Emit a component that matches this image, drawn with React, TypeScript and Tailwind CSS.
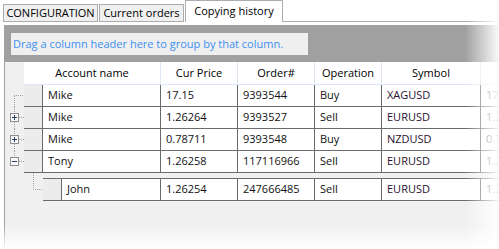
import React from 'react';

const LINE = '#6b6b6b';

type Row = { name: string; price: string; order: string; op: string; symbol: string; close: string };

const ROWS: Row[] = [
  { name: 'Mike', price: '17.15', order: '9393544', op: 'Buy', symbol: 'XAGUSD', close: '17.152' },
  { name: 'Mike', price: '1.26264', order: '9393527', op: 'Sell', symbol: 'EURUSD', close: '1.26271' },
  { name: 'Mike', price: '0.78711', order: '9393548', op: 'Buy', symbol: 'NZDUSD', close: '0.78715' },
  { name: 'Tony', price: '1.26258', order: '117116966', op: 'Sell', symbol: 'EURUSD', close: '1.26263' },
];

const CHILD: Row = { name: 'John', price: '1.26254', order: '247666485', op: 'Sell', symbol: 'EURUSD', close: '1.26259' };

function Expander({ open }: { open: boolean }) {
  return (
    <>
      <rect x="5.5" y="6.5" width="8" height="8" fill="#f7f7f7" stroke="#8e8e8e" />
      <path d="M7 10.5h5" stroke="#2c3e66" />
      {!open && <path d="M9.5 8v5" stroke="#2c3e66" />}
    </>
  );
}

// tree connectors in the left gutter, one per top-level row
function Gutter({ kind }: { kind: 'first' | 'mid' | 'last' }) {
  const dot = { stroke: '#a3a3a3', strokeDasharray: '1 1', fill: 'none' };
  return (
    <svg width="19" height="22" className="shrink-0" aria-hidden>
      {kind === 'first' ? (
        <>
          <path d="M9 10.5h10" {...dot} />
          <path d="M9.5 11v11" {...dot} />
        </>
      ) : (
        <>
          <path d="M9.5 0v6" {...dot} />
          {kind === 'mid' && <path d="M9.5 15v7" {...dot} />}
          <path d="M14 10.5h5" {...dot} />
          <Expander open={kind === 'last'} />
        </>
      )}
    </svg>
  );
}

function Cell({ w, children, muted }: { w: string; children?: React.ReactNode; muted?: boolean }) {
  return (
    <div
      className={`${w} flex shrink-0 items-center overflow-hidden whitespace-nowrap border-r border-[#6b6b6b] bg-white pl-[5px] ${
        muted ? 'text-[#555]' : 'text-[#111]'
      }`}
    >
      {children}
    </div>
  );
}

function Cells({ r, nameW }: { r: Row; nameW: string }) {
  return (
    <>
      <div className="w-[19px] shrink-0 border-r border-[#6b6b6b] bg-[#ececec]" />
      <Cell w={nameW}>{r.name}</Cell>
      <Cell w="w-[77px]">{r.price}</Cell>
      <Cell w="w-[77px]">{r.order}</Cell>
      <Cell w="w-[67px]">{r.op}</Cell>
      <Cell w="w-[99px]">
        <span className="text-[#2a1030]">{r.symbol}</span>
      </Cell>
      <Cell w="w-[100px]" muted>
        {r.close}
      </Cell>
    </>
  );
}

function HeadCell({ w, children }: { w: string; children: React.ReactNode }) {
  return (
    <div className={`${w} flex shrink-0 items-center justify-center border-r border-[#dde8f4]`}>{children}</div>
  );
}

export default function App() {
  return (
    <div
      className="relative h-[249px] w-[499px] overflow-hidden bg-white text-[11px] text-black"
      style={{ fontFamily: '"Open Sans", "Noto Sans", sans-serif' }}
    >
      {/* tabs */}
      <div className="flex h-[22px] items-end pl-[3px]">
        <div className="flex h-[18px] w-[95px] items-center justify-center border border-[#acacac] bg-[#f0f0f0]">
          CONFIGURATION
        </div>
        <div className="ml-[1px] flex h-[18px] w-[85px] items-center justify-center border border-[#acacac] bg-[#f0f0f0]">
          Current orders
        </div>
        <div className="ml-[1px] flex h-[22px] w-[98px] items-start justify-center border border-b-0 border-[#acacac] bg-white pt-[2px]">
          Copying history
        </div>
        <div className="h-[1px] flex-1 bg-[#acacac]" />
      </div>

      {/* grid */}
      <div className="ml-[4px] mt-[3px] flex h-[224px] flex-col">
        <div className="h-[37px] bg-[#a0a0a0] pl-[7px] pt-[8px]">
          <div className="flex h-[22px] w-[297px] items-center bg-[#efefef] pl-[2px] text-[#3d8ff0]">
            Drag a column header here to group by that column.
          </div>
        </div>

        <div className="flex-1 border-l border-[#a0a0a0] bg-[#f0f0f0]">
          <div className="flex h-[23px]">
            <div className="w-[19px] shrink-0" />
            <div className="flex flex-1 border-b border-[#dde8f4] bg-white">
              <HeadCell w="w-[137px]">Account name</HeadCell>
              <HeadCell w="w-[77px]">Cur Price</HeadCell>
              <HeadCell w="w-[77px]">Order#</HeadCell>
              <HeadCell w="w-[67px]">Operation</HeadCell>
              <HeadCell w="w-[99px]">Symbol</HeadCell>
              <HeadCell w="w-[100px]">
                <span className="text-[#555]">Close Price</span>
              </HeadCell>
            </div>
          </div>

          {ROWS.map((r, i) => (
            <div key={i} className="flex h-[22px]">
              <Gutter kind={i === 0 ? 'first' : i === ROWS.length - 1 ? 'last' : 'mid'} />
              <div className="flex flex-1 border-b border-[#6b6b6b]">
                <Cells r={r} nameW="w-[118px]" />
              </div>
            </div>
          ))}

          {/* child band under Tony */}
          <div className="flex h-[28px]">
            <svg width="38" height="28" className="shrink-0" aria-hidden>
              <path d="M28.5 0v16.5h10" stroke="#a3a3a3" strokeDasharray="1 1" fill="none" />
            </svg>
            <div className="flex-1 pt-[5px]">
              <div className="flex h-[23px] border-y" style={{ borderColor: LINE }}>
                <Cells r={CHILD} nameW="w-[99px]" />
              </div>
            </div>
          </div>
        </div>
      </div>

      {/* soft fade on the right and bottom edges */}
      <div className="pointer-events-none absolute right-0 top-0 h-full w-[34px] bg-linear-to-r from-white/0 to-white/95" />
      <div className="pointer-events-none absolute bottom-0 left-0 h-[24px] w-full bg-linear-to-b from-white/0 to-white" />
    </div>
  );
}
